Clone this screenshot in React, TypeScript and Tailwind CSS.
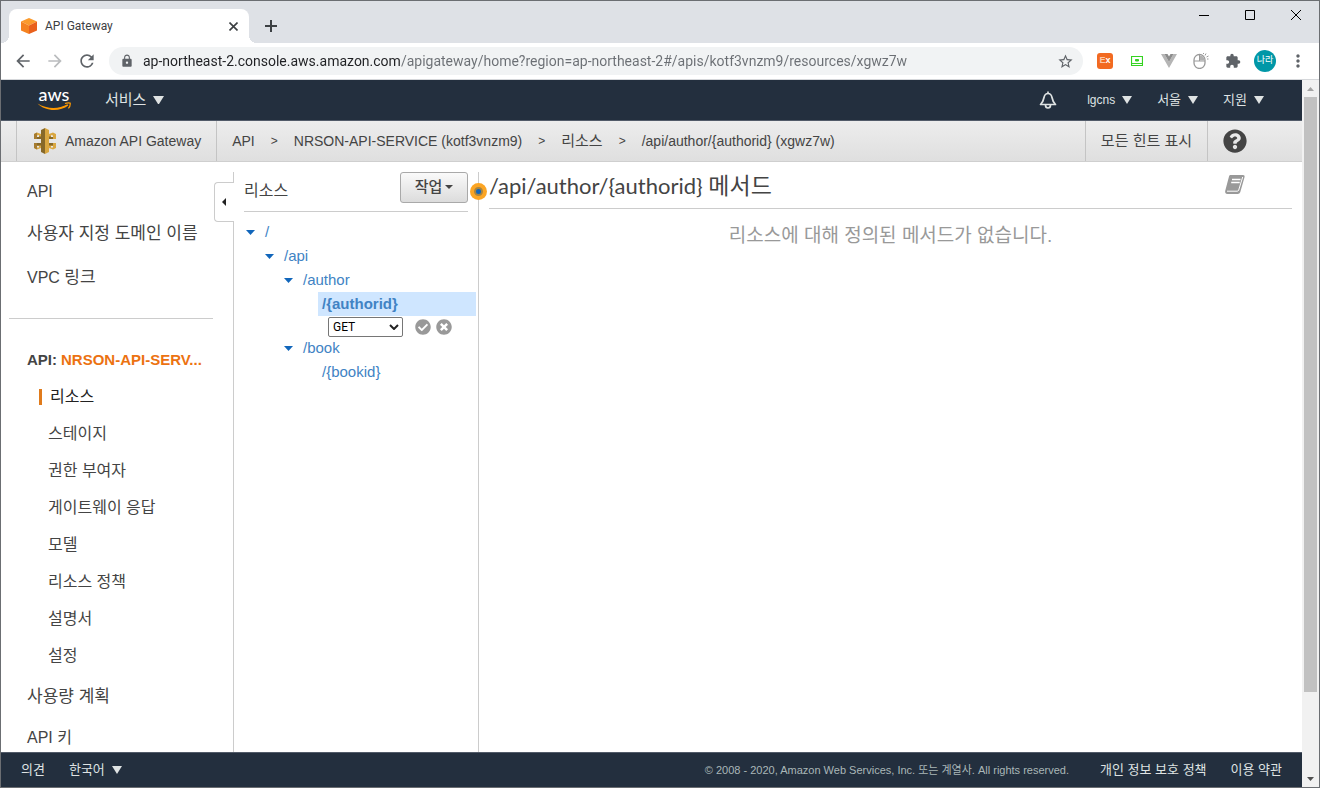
import { useState } from 'react'
import { FaCheckCircle, FaQuestionCircle, FaTimesCircle } from 'react-icons/fa'
import { MdArrowBack, MdArrowForward, MdExtension, MdLock, MdMoreVert, MdRefresh, MdStarBorder } from 'react-icons/md'

const arial = "font-['Liberation_Sans','Noto_Sans_CJK_KR',sans-serif]"
const ui = "font-['Roboto','Noto_Sans_CJK_KR',sans-serif]"

const apiMenu = ['리소스', '스테이지', '권한 부여자', '게이트웨이 응답', '모델', '리소스 정책', '설명서', '설정']

function DownTriangle({ className = 'w-[10px]' }: { className?: string }) {
  return (
    <svg viewBox="0 0 10 8" className={className} fill="currentColor" aria-hidden="true">
      <path d="M0 0h10L5 8z" />
    </svg>
  )
}

function CubeLogo() {
  return (
    <svg width="16" height="16" viewBox="0 0 16 16" aria-hidden="true">
      <path d="M8 0l8 3.6L8 7.4 0 3.6z" fill="#fb9a2c" />
      <path d="M0 3.6l8 3.8V16l-8-3.6z" fill="#f58220" />
      <path d="M16 3.6L8 7.4V16l8-3.6z" fill="#e9601c" />
    </svg>
  )
}

function GatewayLogo() {
  return (
    <svg width="24" height="26" viewBox="0 0 24 26" aria-hidden="true">
      <path d="M1 6l3-1.500L8 6v5H1zM1 15h7v5l-4 1.500L1 20z" fill="#d9a741" />
      <path d="M1 6l3-1.500V11H1zM1 15h3v6.500L1 20z" fill="#a67c30" />
      <path d="M4 8.500h4V11H4zM4 15h4v2.500H4z" fill="#876929" />
      <path d="M23 6l-3-1.500L16 6v5h7zM23 15h-7v5l4 1.500 3-1.500z" fill="#d9a741" />
      <path d="M16 8.500h4V11h-4zM16 15h4v2.500h-4z" fill="#876929" />
      <path d="M4 7.500L6 7v2H4zM4 18h2v1.500H4zM18 7l2 .5V9h-2zM18 18h2v1.500h-2z" fill="#e8e8e8" />
      <path d="M12 0L8 2v22l4 2z" fill="#876929" />
      <path d="M12 0l4 2v22l-4 2z" fill="#d9a741" />
    </svg>
  )
}

function TitleBar() {
  return (
    <div className="flex h-[42px] shrink-0 items-end bg-[#dee1e6]">
      <div className="relative ml-2 flex h-[34px] w-60 items-center rounded-t-lg bg-white pr-2 pl-3">
        {/* curved feet of the active tab */}
        <span className="absolute bottom-0 -left-2 size-2 bg-[radial-gradient(circle_at_0_0,#dee1e6_8px,white_8px)]" />
        <span className="absolute -right-2 bottom-0 size-2 bg-[radial-gradient(circle_at_100%_0,#dee1e6_8px,white_8px)]" />
        <CubeLogo />
        <span className={`${ui} ml-2 flex-1 text-xs text-[#3c4043]`}>API Gateway</span>
        <button aria-label="Close tab" className="flex size-4 items-center justify-center">
          <svg width="9" height="9" viewBox="0 0 9 9" stroke="#3c4043" strokeWidth="1.6">
            <path d="M.5.5l8 8M8.5.5l-8 8" />
          </svg>
        </button>
      </div>
      <button aria-label="New tab" className="ml-4 flex h-[34px] items-center">
        <svg width="12" height="12" viewBox="0 0 12 12" stroke="#3c4043" strokeWidth="2">
          <path d="M6 0v12M0 6h12" />
        </svg>
      </button>
      <div className="ml-auto flex h-full items-start gap-9 pt-[9px] pr-[18px]">
        <button aria-label="Minimize">
          <svg width="10" height="10" viewBox="0 0 10 10" stroke="#000"><path d="M0 5.5h10" /></svg>
        </button>
        <button aria-label="Maximize">
          <svg width="10" height="10" viewBox="0 0 10 10" stroke="#000" fill="none"><path d="M.5.5h9v9h-9z" /></svg>
        </button>
        <button aria-label="Close">
          <svg width="10" height="10" viewBox="0 0 10 10" stroke="#000"><path d="M0 0l10 10M10 0L0 10" /></svg>
        </button>
      </div>
    </div>
  )
}

function Toolbar() {
  const [url, setUrl] = useState(
    'ap-northeast-2.console.aws.amazon.com/apigateway/home?region=ap-northeast-2#/apis/kotf3vnzm9/resources/xgwz7w'
  )

  return (
    <div className="flex h-[37px] shrink-0 items-center border-b border-[#d5d7da] bg-white pr-[11px] pl-3 text-[#5f6368]">
      <button aria-label="Back"><MdArrowBack size={20} /></button>
      <button aria-label="Forward" className="ml-3 text-[#babcbe]"><MdArrowForward size={20} /></button>
      <button aria-label="Reload" className="ml-3"><MdRefresh size={20} /></button>
      <div className="ml-3 flex h-7 flex-1 items-center rounded-full bg-[#f1f3f4] pr-[9px] pl-[11px]">
        <MdLock size={14} />
        {/* host part is darker than the path */}
        <input
          aria-label="Address"
          value={url}
          onChange={(e) => setUrl(e.target.value)}
          className={`${ui} ml-[9px] min-w-0 flex-1 bg-[linear-gradient(90deg,#202124_258px,#6b6f74_258px)] bg-clip-text text-sm text-transparent caret-black outline-none`}
        />
        <button aria-label="Bookmark"><MdStarBorder size={17} /></button>
      </div>
      <div className="ml-[14px] flex items-center gap-4">
        <button className={`${arial} size-4 rounded-[3px] bg-[#f26a21] text-[9px] font-bold text-white`}>
          <span className="text-[#fbc9a8]">E</span>x
        </button>
        <button aria-label="Screen capture" className="flex size-4 items-center justify-center">
          <svg width="12" height="10" viewBox="0 0 12 10" fill="none" stroke="#35d321">
            <path d="M.5.5h11v9H.5z" strokeWidth="1.2" />
            <path d="M1 7.5h10" />
            <path d="M4.500 3.500h3v1.500h-3z" fill="#35d321" />
          </svg>
        </button>
        <button aria-label="Vue devtools">
          <svg width="16" height="14" viewBox="0 0 16 14">
            <path d="M0 0h3.500L8 8l4.500-8H16L8 14z" fill="#b5b5b5" />
            <path d="M3.500 0h3L8 2.600 9.500 0h3L8 8z" fill="#8c8c8c" />
          </svg>
        </button>
        <button aria-label="Mouse gestures">
          <svg width="16" height="16" viewBox="0 0 16 16" fill="none" stroke="#9a9a9a">
            <rect x="1" y="1.500" width="11" height="14" rx="5.500" strokeWidth="1.300" />
            <path d="M1 8h11M6.500 2v6" />
            <path d="M7 2.500c3 0 4.500 2 4.500 5H7z" fill="#b0b0b0" stroke="none" />
            <path d="M12 2.500l1-2M13.500 4l2-1M10.500 1V0M14 6h1.500" />
          </svg>
        </button>
        <button aria-label="Extensions"><MdExtension size={16} /></button>
        <button className={`${ui} -ml-[3px] size-[22px] rounded-full bg-[#0097a7] text-[9px] text-white`}>나라</button>
        <button aria-label="Menu" className="-ml-[4px]"><MdMoreVert size={20} /></button>
      </div>
    </div>
  )
}

function AwsNav() {
  return (
    <nav className={`${arial} flex h-[41px] shrink-0 items-center border-b border-[#525b69] bg-[#232f3e] pr-[38px] pl-9 text-[13px] text-[#dfe3e3]`}>
      <a href="#home" className="flex w-[34px] flex-col items-center pb-[3px]">
        <span className="font-['Lato',sans-serif] text-lg leading-[15px] font-medium text-white">aws</span>
        <svg width="34" height="9" viewBox="0 0 34 9" fill="none" aria-hidden="true">
          <path d="M.5 1.500c9 5.500 21 6 30 .8l.8 1.200C23 10 8 9.500.5 1.500z" fill="#f90" />
          <path d="M28 1.500c2-.8 4-.8 5.200-.4.200 1.600-.4 3.800-1.800 5.200" stroke="#f90" strokeWidth="1.200" />
        </svg>
      </a>
      <button className="ml-[34px] flex items-center gap-[7px] text-[15px]">서비스 <DownTriangle className="w-[11px]" /></button>
      <div className="ml-auto flex items-center">
        <button aria-label="Notifications">
          <svg width="18" height="18" viewBox="0 0 18 18" fill="none" stroke="currentColor" strokeWidth="1.700" strokeLinejoin="round">
            <path d="M9 2.500C6.500 2.500 5.500 4 5 6.500 4.500 9.500 3.500 11.500 1.500 13.500h15C14.500 11.500 13.500 9.500 13 6.500 12.500 4 11.500 2.500 9 2.500zM9 2.500V.5" />
            <path d="M6.500 14c0 4 5 4 5 0" />
          </svg>
        </button>
        <button className="ml-[30px] flex items-center gap-[7px] text-xs">lgcns <DownTriangle /></button>
        <button className="ml-[25px] flex items-center gap-[7px]">서울 <DownTriangle /></button>
        <button className="ml-[25px] flex items-center gap-[7px]">지원 <DownTriangle /></button>
      </div>
    </nav>
  )
}

function ServiceBar() {
  return (
    <div className={`${arial} flex h-[41px] shrink-0 items-stretch border-b border-[#cfcfcf] bg-linear-to-b from-[#ededed] to-[#dfdfdf] pl-[15px] text-sm text-[#444]`}>
      <a href="#gateway" className="flex items-center gap-2 border-x border-[#c4c4c4] pr-[15px] pl-4">
        <GatewayLogo />
        Amazon API Gateway
      </a>
      <div className="flex items-center gap-4 pl-[15px]">
        <a href="#apis">API</a>
        <span className="text-xs">&gt;</span>
        <a href="#service">NRSON-API-SERVICE (kotf3vnzm9)</a>
        <span className="text-xs">&gt;</span>
        <a href="#resources" className="text-[15px]">리소스</a>
        <span className="text-xs">&gt;</span>
        <span>/api/author/{'{authorid}'} (xgwz7w)</span>
      </div>
      <button className="ml-auto border-x border-[#c4c4c4] px-[15px] text-[15px]">모든 힌트 표시</button>
      <button aria-label="Help" className="pr-[55px] pl-[15px]"><FaQuestionCircle size={24} /></button>
    </div>
  )
}

function Sidebar() {
  return (
    <aside className="relative w-[233px] shrink-0 pt-[10px] text-base text-[#444]">
      <div className="h-full overflow-hidden border-r border-[#ccc] pl-[26px]">
        <ul>
          <li className="flex h-10 items-center"><a href="#apis">API</a></li>
          <li className="flex h-[43px] items-center text-[17px]"><a href="#domains">사용자 지정 도메인 이름</a></li>
          <li className="flex h-[45px] items-center"><a href="#vpc">VPC <span className="text-[17px]">링크</span></a></li>
        </ul>
        <hr className="mt-[18px] mr-[20px] -ml-[18px] border-[#ccc]" />
        <h2 className="mt-[31px] flex h-5 items-center gap-1 text-[15px] font-bold">
          API: <a href="#service" className="text-[#ec7211]">NRSON-API-SERV...</a>
        </h2>
        <ul className="mt-2 text-base">
          {apiMenu.map((label, i) => (
            <li key={label} className="flex h-[37px] items-center">
              {i === 0 ? (
                <a href="#current" className="ml-3 border-l-[3px] border-[#e07b1c] pl-2 leading-4 text-[#222]">{label}</a>
              ) : (
                <a href="#menu" className="ml-[21px]">{label}</a>
              )}
            </li>
          ))}
        </ul>
        <ul>
          <li className="flex h-[45px] items-center text-[17px]"><a href="#plans">사용량 계획</a></li>
          <li className="flex h-[37px] items-center"><a href="#keys">API 키</a></li>
        </ul>
      </div>
      <button
        aria-label="Collapse"
        className="absolute top-5 right-0 flex h-10 w-5 items-center justify-center rounded-l border border-r-0 border-[#ccc] bg-white pr-[2px]"
      >
        <svg width="4" height="8" viewBox="0 0 4 8" fill="#222"><path d="M4 0v8L0 4z" /></svg>
      </button>
    </aside>
  )
}

function TreeRow({ label, indent, open }: { label: string; indent: string; open?: boolean }) {
  return (
    <li className={`flex h-6 items-center ${indent}`}>
      <span className="w-[19px] text-[#1166bb]">
        {open && <svg width="9" height="5" viewBox="0 0 9 5" fill="currentColor"><path d="M0 0h9L4.500 5z" /></svg>}
      </span>
      <a href="#node">{label}</a>
    </li>
  )
}

function ResourceTree() {
  const [method, setMethod] = useState('GET')

  return (
    <section className="relative w-[245px] shrink-0 pt-[10px] text-[#444]">
      <div className="h-full border-r border-[#ccc] pl-[10px]">
        <div className="mr-[10px] flex h-10 items-start justify-between border-b border-[#ccc]">
          <h2 className="text-base leading-[38px]">리소스</h2>
          <button className="flex h-[31px] w-[68px] items-center justify-center gap-[3px] rounded-[3px] border border-[#a9a9a9] bg-linear-to-b from-[#fafafa] to-[#dcdcdc] pb-px text-[15px] font-medium">
            작업
            <svg width="8" height="4" viewBox="0 0 8 4" fill="#444"><path d="M0 0h8L4 4z" /></svg>
          </button>
        </div>
        <ul className="mt-2 mr-[2px] text-[15px] text-[#4183c4]">
          <TreeRow label="/" indent="pl-[2px]" open />
          <TreeRow label="/api" indent="pl-[21px]" open />
          <TreeRow label="/author" indent="pl-10" open />
          <li className="ml-[74px] flex h-6 items-center bg-[#cfe6ff] pl-1 font-bold"><a href="#node">/{'{authorid}'}</a></li>
          <li className="flex h-5 items-start pt-px pl-[84px]">
            <span className="relative flex items-center">
              <select
                aria-label="HTTP method"
                value={method}
                onChange={(e) => setMethod(e.target.value)}
                className={`${ui} h-5 w-[75px] appearance-none rounded-[2px] border border-[#767676] bg-white pl-1 text-xs leading-4 text-black`}
              >
                <option>GET</option>
                <option>POST</option>
                <option>PUT</option>
                <option>DELETE</option>
              </select>
              <svg className="pointer-events-none absolute right-1 w-[10px]" viewBox="0 0 10 6" fill="none" stroke="#222" strokeWidth="2">
                <path d="M1 1l4 4 4-4" />
              </svg>
            </span>
            <button aria-label="Confirm" className="ml-3 flex h-5 items-center text-[#999]"><FaCheckCircle size={16} /></button>
            <button aria-label="Cancel" className="ml-[5px] flex h-5 items-center text-[#999]"><FaTimesCircle size={16} /></button>
          </li>
          <TreeRow label="/book" indent="pl-10" open />
          <TreeRow label="/{bookid}" indent="pl-[59px]" />
        </ul>
      </div>
      {/* hint marker on the divider */}
      <span className="absolute top-[21px] -right-2 z-10 flex size-[17px] items-center justify-center rounded-full bg-[#fba524]">
        <span className="size-[9px] rounded-full border-2 border-[#a88440] bg-[#1166bb]" />
      </span>
    </section>
  )
}

function MethodPanel() {
  return (
    <main className="min-w-0 flex-1 pr-[10px] pl-[10px]">
      <div className="flex h-[47px] items-center justify-between border-b border-[#ccc]">
        <h1 className="font-['Lato','Noto_Sans_CJK_KR',sans-serif] text-[22px] text-[#444]">
          /api/author/{'{authorid}'} <span className="text-[23px]">메서드</span>
        </h1>
        <button aria-label="Documentation" className="mr-[46px]">
          <svg width="22" height="20" viewBox="0 0 22 20" aria-hidden="true">
            <path d="M6.500 0h12.500c1.300 0 1.900.9 1.500 2.200L16.300 17c-.4 1.300-1.300 2-2.600 2H3.500C1.500 19 .7 17.300 1.300 15.500L5 1.500C5.300.5 5.700 0 6.500 0z" fill="#999" />
            <path d="M8 4.500h8.500M7.200 7.500h8.500" stroke="#fff" strokeWidth="1.300" />
            <path d="M3 16.200h10.200c.8 0 1.200-.3 1.500-1.100L18.700 2" stroke="#fff" strokeWidth="1" fill="none" />
          </svg>
        </button>
      </div>
      <p className="mt-[13px] text-center text-[19px] leading-7 text-[#999]">리소스에 대해 정의된 메서드가 없습니다.</p>
    </main>
  )
}

function Footer() {
  return (
    <footer className={`${arial} flex h-[35px] shrink-0 items-center border-t border-[#525b69] bg-[#232f3e] px-5 text-[13px] text-[#dfe3e3]`}>
      <a href="#feedback">의견</a>
      <button className="ml-6 flex items-center gap-[7px]">한국어 <DownTriangle /></button>
      <span className="ml-auto text-[11px] text-[#aab7b8]">© 2008 - 2020, Amazon Web Services, Inc. 또는 계열사. All rights reserved.</span>
      <a href="#privacy" className="ml-[31px]">개인 정보 보호 정책</a>
      <a href="#terms" className="ml-6">이용 약관</a>
    </footer>
  )
}

function Scrollbar() {
  return (
    <div className="flex w-[17px] shrink-0 flex-col items-center bg-[#f1f1f1]" aria-hidden="true">
      <span className="flex h-[17px] items-center text-[#a3a3a3]">
        <svg width="7" height="4" viewBox="0 0 7 4" fill="currentColor"><path d="M0 4h7L3.500 0z" /></svg>
      </span>
      <span className="w-[13px] grow-[595] bg-[#c1c1c1]" />
      <span className="grow-[78]" />
      <span className="flex h-[17px] items-center text-[#505050]">
        <svg width="7" height="4" viewBox="0 0 7 4" fill="currentColor"><path d="M0 0h7L3.500 4z" /></svg>
      </span>
    </div>
  )
}

export default function App() {
  return (
    <div className={`${arial} flex h-screen flex-col overflow-hidden border border-[#6b6e72] bg-white`}>
      <TitleBar />
      <Toolbar />
      <div className="flex min-h-0 flex-1">
        <div className="flex min-w-0 flex-1 flex-col">
          <AwsNav />
          <ServiceBar />
          <div className="flex min-h-0 flex-1">
            <Sidebar />
            <ResourceTree />
            <MethodPanel />
          </div>
          <Footer />
        </div>
        <Scrollbar />
      </div>
    </div>
  )
}
